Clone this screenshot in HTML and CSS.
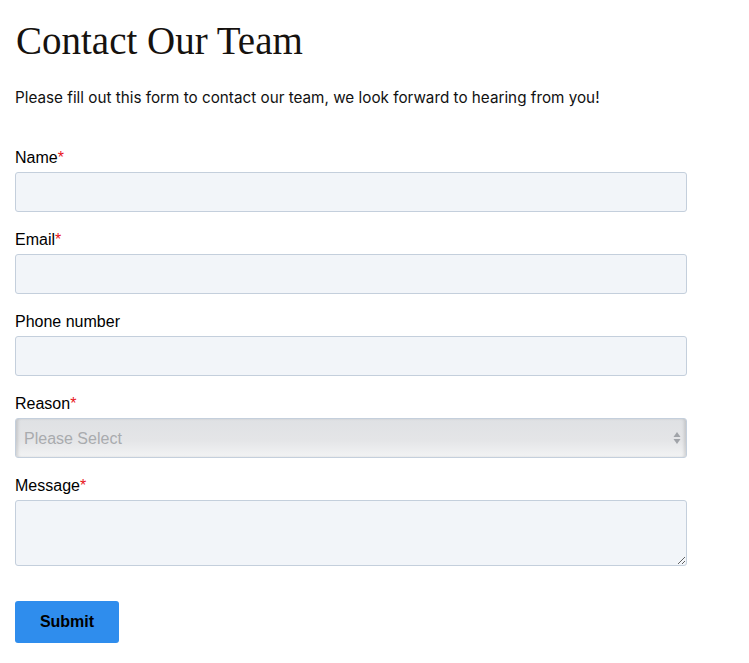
FILE: index.html
```html
<!DOCTYPE html>
<html lang="en">
<head>
<meta charset="utf-8">
<title>Contact Our Team</title>
<link rel="stylesheet" href="styles.css">
</head>
<body>
<main class="page">
  <h1 class="title">Contact Our Team</h1>
  <p class="intro">Please fill out this form to contact our team, we look forward to hearing from you!</p>
  <form class="form">
    <div class="field">
      <label class="label" for="name">Name<span class="req">*</span></label>
      <input class="input" id="name" type="text">
    </div>
    <div class="field">
      <label class="label" for="email">Email<span class="req">*</span></label>
      <input class="input" id="email" type="email">
    </div>
    <div class="field">
      <label class="label" for="phone">Phone number</label>
      <input class="input" id="phone" type="tel">
    </div>
    <div class="field">
      <label class="label" for="reason">Reason<span class="req">*</span></label>
      <div class="select-wrap">
        <select class="select" id="reason">
          <option>Please Select</option>
        </select>
        <svg class="arrows" width="8" height="14" viewBox="0 0 8 14"><path d="M4 1 L7.5 6 H0.5 Z" fill="#a0a3a8"/><path d="M4 13 L7.5 8 H0.5 Z" fill="#a0a3a8"/></svg>
      </div>
    </div>
    <div class="field">
      <label class="label" for="message">Message<span class="req">*</span></label>
      <textarea class="textarea" id="message"></textarea>
    </div>
    <button class="submit" type="button">Submit</button>
  </form>
</main>
</body>
</html>
```
FILE: styles.css
```css
* { box-sizing: border-box; }
body {
  margin: 0;
  background: #fff;
  color: #000;
}
.page {
  padding: 0 15px;
  width: 702px;
}
.title {
  font-family: "Liberation Serif", "DejaVu Serif", serif;
  font-weight: 400;
  font-size: 39px;
  line-height: 48px;
  margin: 17px 0 0 1px;
  color: #16120f;
}
.intro {
  font-family: Inter, "Liberation Sans", sans-serif;
  font-size: 15.25px;
  line-height: 24px;
  margin: 21px 0 0;
  color: #111;
}
.form {
  margin-top: 39px;
  display: flex;
  flex-direction: column;
}
.field {
  display: flex;
  flex-direction: column;
  margin-bottom: 19px;
}
.label {
  font-family: "Liberation Sans", Arial, sans-serif;
  font-size: 16px;
  line-height: 18px;
  margin-bottom: 5px;
}
.req { color: #e8141b; }
.input, .textarea, .select {
  width: 672px;
  height: 40px;
  border: 1px solid #c4cfdc;
  border-radius: 3px;
  background: #f2f5f9;
  font-family: "Liberation Sans", Arial, sans-serif;
  font-size: 16px;
  padding: 0 8px;
  margin: 0;
}
.textarea {
  height: 66px;
  display: block;
  resize: vertical;
}
.select-wrap {
  position: relative;
  width: 672px;
}
.select {
  appearance: none;
  -webkit-appearance: none;
  background: linear-gradient(#dfe1e4, #e4e5e7 55%, #f2f3f4);
  box-shadow: inset 3px 0 3px -1px rgba(0,0,0,0.12), inset -3px 0 3px -1px rgba(0,0,0,0.12);
  color: #a9abae;
  display: block;
}
.arrows {
  position: absolute;
  right: 6px;
  top: 13px;
}
.submit {
  margin-top: 16px;
  width: 104px;
  height: 42px;
  border: none;
  border-radius: 3px;
  background: #2f8ded;
  color: #000;
  font-family: "Liberation Sans", Arial, sans-serif;
  font-weight: 700;
  font-size: 16px;
  padding: 0;
}
```
